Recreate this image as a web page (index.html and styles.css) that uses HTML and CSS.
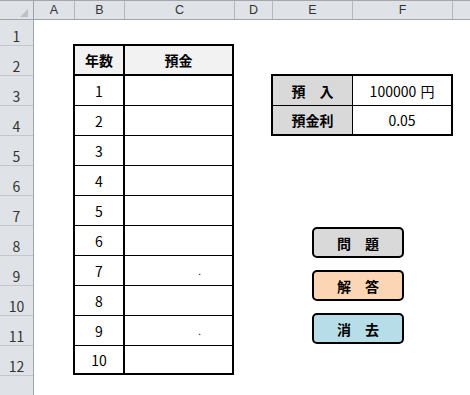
FILE: index.html
```html
<!DOCTYPE html>
<html lang="ja">
<head>
    <meta charset="UTF-8">
    <title>預金計算</title>
    <link rel="stylesheet" href="styles.css">
</head>
<body>
    <div class="sheet">
        <div class="col-heads">
            <div class="corner">
                <svg width="8" height="8" viewBox="0 0 8 8"><polygon points="8,0 8,8 0,8" fill="#bcc1c7"/></svg>
            </div>
            <div class="col-head col-a">A</div>
            <div class="col-head col-b">B</div>
            <div class="col-head col-c">C</div>
            <div class="col-head col-d">D</div>
            <div class="col-head col-e">E</div>
            <div class="col-head col-f">F</div>
            <div class="col-head col-g"></div>
        </div>

        <div class="sheet-body">
            <div class="row-heads">
                <div class="row-head first">1</div>
                <div class="row-head">2</div>
                <div class="row-head">3</div>
                <div class="row-head">4</div>
                <div class="row-head">5</div>
                <div class="row-head">6</div>
                <div class="row-head">7</div>
                <div class="row-head">8</div>
                <div class="row-head">9</div>
                <div class="row-head">10</div>
                <div class="row-head">11</div>
                <div class="row-head">12</div>
                <div class="row-head last"></div>
            </div>

            <div class="cells">
                <table class="ledger">
                    <tr class="ledger-head">
                        <td class="year">年数</td>
                        <td class="amount">預金</td>
                    </tr>
                    <tr><td class="year">1</td><td class="amount"></td></tr>
                    <tr><td class="year">2</td><td class="amount"></td></tr>
                    <tr><td class="year">3</td><td class="amount"></td></tr>
                    <tr><td class="year">4</td><td class="amount"></td></tr>
                    <tr><td class="year">5</td><td class="amount"></td></tr>
                    <tr><td class="year">6</td><td class="amount"></td></tr>
                    <tr><td class="year">7</td><td class="amount dot">.</td></tr>
                    <tr><td class="year">8</td><td class="amount"></td></tr>
                    <tr><td class="year">9</td><td class="amount dot">.</td></tr>
                    <tr class="ledger-last"><td class="year">10</td><td class="amount"></td></tr>
                </table>

                <div class="side">
                    <table class="rate">
                        <tr>
                            <td class="label">預　入</td>
                            <td class="value">100000 <span class="unit">円</span></td>
                        </tr>
                        <tr class="rate-last">
                            <td class="label">預金利</td>
                            <td class="value">0.05</td>
                        </tr>
                    </table>

                    <div class="buttons">
                        <button class="btn btn-question">問　題</button>
                        <button class="btn btn-answer">解　答</button>
                        <button class="btn btn-clear">消　去</button>
                    </div>
                </div>
            </div>
        </div>
    </div>
</body>
</html>
```

FILE: styles.css
```css
* {
    box-sizing: border-box;
}
body {
    margin: 0;
    background: #fff;
    font-family: "Noto Sans CJK JP", "Liberation Sans", sans-serif;
    color: #000;
}
.sheet {
    width: 470px;
    height: 395px;
    overflow: hidden;
}

/* column headers */
.col-heads {
    display: flex;
    height: 20px;
    background: #dfe3e8;
    border-top: 1px solid #a3a8ae;
    border-bottom: 1px solid #9ea4ac;
}
.corner {
    width: 34px;
    border-right: 1px solid #9ea4ac;
    display: flex;
    justify-content: flex-end;
    align-items: flex-end;
    padding: 0 5px 2px 0;
}
.col-head {
    border-right: 1px solid #b3b8bf;
    font-family: "Liberation Sans", sans-serif;
    font-size: 12.5px;
    color: #333;
    text-align: center;
    line-height: 18px;
}
.col-a { width: 41px; }
.col-b { width: 50px; }
.col-c { width: 110px; }
.col-d { width: 38px; }
.col-e { width: 80px; }
.col-f { width: 100px; }
.col-g { flex: 1; border-right: none; }

/* row headers */
.sheet-body {
    display: flex;
}
.row-heads {
    width: 34px;
    background: #dfe3e8;
    border-right: 1px solid #9ea4ac;
}
.row-head {
    height: 30px;
    border-bottom: 1px solid #c3c7cd;
    display: flex;
    justify-content: center;
    align-items: flex-end;
    padding-bottom: 1px;
    font-size: 14px;
    line-height: 16px;
    color: #333;
}
.row-head.first { height: 26px; }
.row-head.last { height: 30px; border-bottom: none; }

/* cells area */
.cells {
    display: flex;
    align-items: flex-start;
}

.ledger {
    margin: 24px 0 0 39px;
    border: 2px solid #000;
    border-collapse: separate;
    border-spacing: 0;
    font-size: 14px;
}
.ledger td {
    height: 30px;
    padding: 0;
    border-bottom: 1px solid #000;
    text-align: center;
}
.ledger .year {
    width: 50px;
    border-right: 2px solid #000;
}
.ledger .amount {
    width: 107px;
}
.ledger-head td {
    background: #f2f2f2;
    border-bottom-width: 2px;
    font-weight: bold;
}
.ledger-last td {
    height: 27px;
    border-bottom: none;
}
.ledger .dot {
    text-align: right;
    padding-right: 31px;
    font-size: 10px;
}

.side {
    margin: 54px 0 0 37px;
}
.rate {
    border: 2px solid #000;
    border-collapse: separate;
    border-spacing: 0;
    font-size: 14px;
}
.rate td {
    height: 30px;
    padding: 0;
    border-bottom: 1px solid #000;
    text-align: center;
}
.rate .label {
    width: 80px;
    background: #d9d9d9;
    border-right: 1px solid #000;
    font-weight: bold;
}
.rate .value {
    width: 98px;
}
.rate .unit {
    margin-left: 1px;
}
.rate-last td {
    height: 28px;
    border-bottom: none;
}

.buttons {
    display: flex;
    flex-direction: column;
    gap: 12px;
    margin: 91px 0 0 41px;
}
.btn {
    width: 92px;
    height: 31px;
    border: 2px solid #000;
    border-radius: 5px;
    padding: 0;
    font-family: "Noto Sans CJK JP", sans-serif;
    font-size: 14px;
    font-weight: bold;
    color: #000;
}
.btn-question { background: #d9d9d9; }
.btn-answer { background: #fcd5b5; }
.btn-clear { background: #b7dee8; }
```
